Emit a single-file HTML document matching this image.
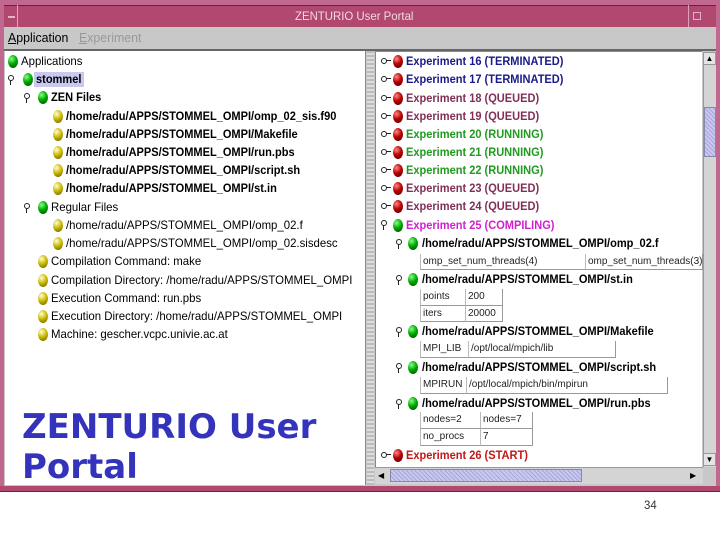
<!DOCTYPE html>
<html><head><meta charset="utf-8"><style>
*{margin:0;padding:0;box-sizing:border-box}
body{width:720px;height:540px;background:#fff;position:relative;overflow:hidden;font-family:"Liberation Sans",sans-serif}
.a{position:absolute}
.t{position:absolute;font-size:12px;line-height:14px;white-space:nowrap;color:#000;transform:scaleX(0.95);transform-origin:left center}
.t.b{font-weight:bold;transform:scaleX(0.92)}
.g,.r,.y{position:absolute;width:10px;height:13px;border-radius:50%}
.g{background:radial-gradient(circle at 35% 30%,#8f8,#0a0 45%,#040 100%)}
.r{background:radial-gradient(circle at 35% 30%,#f88,#b00 45%,#400 100%)}
.y{background:radial-gradient(circle at 35% 30%,#ffd,#cb0 45%,#650 100%)}
.k{position:absolute;width:6px;height:6px;border:1.5px solid #222;border-radius:50%}
.k:after{content:"";position:absolute;left:1px;top:4px;width:1px;height:5px;background:#222}
.kr{position:absolute;width:6px;height:6px;border:1.5px solid #222;border-radius:50%}
.kr:after{content:"";position:absolute;left:4px;top:1px;width:5px;height:1px;background:#222}
.c{position:absolute;border:1px solid #999;border-top:none;border-left:1px solid #bbb;font-size:10px;line-height:15px;padding-left:2px;color:#222;white-space:nowrap;overflow:hidden}
</style></head><body>
<div class="a" style="left:0;top:0;width:720px;height:492px;background:#c06890"></div>
<div class="a" style="left:4px;top:5px;width:712px;height:22px;background:#b04870;border-top:1px solid #6a2040"></div>
<div class="a" style="left:17px;top:5px;width:1px;height:22px;background:#e0a0c0"></div>
<div class="a" style="left:8px;top:16px;width:7px;height:2px;background:#e8b0c8"></div>
<div class="a" style="left:688px;top:5px;width:1px;height:22px;background:#e0a0c0"></div>
<div class="a" style="left:693px;top:12px;width:8px;height:8px;border:1px solid #e8b0c8"></div>
<div class="t" style="left:295px;top:9px;color:#f4d8e4;font-size:12px">ZENTURIO User Portal</div>
<div class="a" style="left:4px;top:27px;width:712px;height:22px;background:#c8c8c8"></div>
<div class="t" style="left:8px;top:31px;font-size:13px"><u>A</u>pplication</div>
<div class="t" style="left:79px;top:31px;font-size:13px;color:#999"><u>E</u>xperiment</div>
<div class="a" style="left:4px;top:49px;width:712px;height:2px;background:#666"></div>
<div class="a" style="left:4px;top:51px;width:712px;height:435px;background:#c8c8c8"></div>
<div class="a" style="left:5px;top:51px;width:361px;height:434px;background:#fff;border-right:1px solid #888"></div>
<div class="a" style="left:367px;top:51px;width:7px;height:434px;background:repeating-linear-gradient(0deg,#bbb 0 2px,#ddd 2px 4px)"></div>
<div class="a" style="left:375px;top:51px;width:327px;height:416px;background:#fff;border-left:1px solid #888;border-top:1px solid #888"></div>
<div class="a" style="left:703px;top:52px;width:13px;height:415px;background:#d4d4d4;border-left:1px solid #999"></div>
<div class="a" style="left:703px;top:52px;width:13px;height:13px;background:#e4e4e4;border:1px solid #999;font-size:8px;text-align:center;line-height:11px">▲</div>
<div class="a" style="left:704px;top:107px;width:12px;height:50px;background:repeating-linear-gradient(45deg,#a8a8d8 0 1px,#c8c8f0 1px 3px);border:1px solid #88a"></div>
<div class="a" style="left:703px;top:453px;width:13px;height:13px;background:#e4e4e4;border:1px solid #999;font-size:8px;text-align:center;line-height:11px">▼</div>
<div class="a" style="left:375px;top:467px;width:328px;height:17px;background:#d4d4d4;border-top:1px solid #999"></div>
<div class="a" style="left:378px;top:469px;width:10px;height:13px;font-size:8px;line-height:13px">◀</div>
<div class="a" style="left:390px;top:469px;width:192px;height:13px;background:repeating-linear-gradient(45deg,#a8a8d8 0 1px,#c8c8f0 1px 3px);border:1px solid #88a"></div>
<div class="a" style="left:690px;top:469px;width:10px;height:13px;font-size:8px;line-height:13px">▶</div>
<div class="a" style="left:0;top:486px;width:720px;height:6px;background:#b04870;border-bottom:1px solid #6a2040"></div>

<div class="g" style="left:8px;top:55px"></div><div class="t" style="left:21px;top:54px">Applications</div>
<div class="k" style="left:8px;top:75px"></div><div class="g" style="left:23px;top:73px"></div>
<div class="a" style="left:34px;top:72px;width:50px;height:15px;background:#c8c8f0"></div><div class="t b" style="left:36px;top:72px">stommel</div>
<div class="k" style="left:24px;top:93px"></div><div class="g" style="left:38px;top:91px"></div><div class="t b" style="left:51px;top:90px">ZEN Files</div>
<div class="y" style="left:53px;top:110px"></div><div class="t b" style="left:66px;top:109px">/home/radu/APPS/STOMMEL_OMPI/omp_02_sis.f90</div>
<div class="y" style="left:53px;top:128px"></div><div class="t b" style="left:66px;top:127px">/home/radu/APPS/STOMMEL_OMPI/Makefile</div>
<div class="y" style="left:53px;top:146px"></div><div class="t b" style="left:66px;top:145px">/home/radu/APPS/STOMMEL_OMPI/run.pbs</div>
<div class="y" style="left:53px;top:164px"></div><div class="t b" style="left:66px;top:163px">/home/radu/APPS/STOMMEL_OMPI/script.sh</div>
<div class="y" style="left:53px;top:182px"></div><div class="t b" style="left:66px;top:181px">/home/radu/APPS/STOMMEL_OMPI/st.in</div>
<div class="k" style="left:24px;top:203px"></div><div class="g" style="left:38px;top:201px"></div><div class="t" style="left:51px;top:200px">Regular Files</div>
<div class="y" style="left:53px;top:219px"></div><div class="t" style="left:66px;top:218px">/home/radu/APPS/STOMMEL_OMPI/omp_02.f</div>
<div class="y" style="left:53px;top:237px"></div><div class="t" style="left:66px;top:236px">/home/radu/APPS/STOMMEL_OMPI/omp_02.sisdesc</div>
<div class="y" style="left:38px;top:255px"></div><div class="t" style="left:51px;top:254px">Compilation Command: make</div>
<div class="y" style="left:38px;top:274px"></div><div class="t" style="left:51px;top:273px">Compilation Directory: /home/radu/APPS/STOMMEL_OMPI</div>
<div class="y" style="left:38px;top:292px"></div><div class="t" style="left:51px;top:291px">Execution Command: run.pbs</div>
<div class="y" style="left:38px;top:310px"></div><div class="t" style="left:51px;top:309px">Execution Directory: /home/radu/APPS/STOMMEL_OMPI</div>
<div class="y" style="left:38px;top:328px"></div><div class="t" style="left:51px;top:327px">Machine: gescher.vcpc.univie.ac.at</div>
<div class="a" style="left:22px;top:407px;font-family:'Comic Sans MS','DejaVu Sans',sans-serif;font-size:34px;line-height:40px;font-weight:bold;color:#3333bb;white-space:nowrap">ZENTURIO User<br>Portal</div>

<div class="kr" style="left:381px;top:58px"></div><div class="r" style="left:393px;top:55px"></div><div class="t b" style="left:406px;top:54px;color:#1a1a8a">Experiment 16 (TERMINATED)</div>
<div class="kr" style="left:381px;top:76px"></div><div class="r" style="left:393px;top:73px"></div><div class="t b" style="left:406px;top:72px;color:#1a1a8a">Experiment 17 (TERMINATED)</div>
<div class="kr" style="left:381px;top:95px"></div><div class="r" style="left:393px;top:92px"></div><div class="t b" style="left:406px;top:91px;color:#803055">Experiment 18 (QUEUED)</div>
<div class="kr" style="left:381px;top:113px"></div><div class="r" style="left:393px;top:110px"></div><div class="t b" style="left:406px;top:109px;color:#803055">Experiment 19 (QUEUED)</div>
<div class="kr" style="left:381px;top:131px"></div><div class="r" style="left:393px;top:128px"></div><div class="t b" style="left:406px;top:127px;color:#209a20">Experiment 20 (RUNNING)</div>
<div class="kr" style="left:381px;top:149px"></div><div class="r" style="left:393px;top:146px"></div><div class="t b" style="left:406px;top:145px;color:#209a20">Experiment 21 (RUNNING)</div>
<div class="kr" style="left:381px;top:167px"></div><div class="r" style="left:393px;top:164px"></div><div class="t b" style="left:406px;top:163px;color:#209a20">Experiment 22 (RUNNING)</div>
<div class="kr" style="left:381px;top:185px"></div><div class="r" style="left:393px;top:182px"></div><div class="t b" style="left:406px;top:181px;color:#803055">Experiment 23 (QUEUED)</div>
<div class="kr" style="left:381px;top:203px"></div><div class="r" style="left:393px;top:200px"></div><div class="t b" style="left:406px;top:199px;color:#803055">Experiment 24 (QUEUED)</div>
<div class="k" style="left:381px;top:220px"></div><div class="g" style="left:393px;top:219px"></div><div class="t b" style="left:406px;top:218px;color:#d020d0">Experiment 25 (COMPILING)</div>

<div class="k" style="left:396px;top:239px"></div><div class="g" style="left:408px;top:237px"></div><div class="t b" style="left:422px;top:236px">/home/radu/APPS/STOMMEL_OMPI/omp_02.f</div>
<div class="c" style="left:420px;top:254px;width:166px;height:16px">omp_set_num_threads(4)</div>
<div class="c" style="left:585px;top:254px;width:118px;height:16px">omp_set_num_threads(3)</div>
<div class="k" style="left:396px;top:275px"></div><div class="g" style="left:408px;top:273px"></div><div class="t b" style="left:422px;top:272px">/home/radu/APPS/STOMMEL_OMPI/st.in</div>
<div class="c" style="left:420px;top:289px;width:46px;height:17px">points</div>
<div class="c" style="left:465px;top:289px;width:38px;height:17px">200</div>
<div class="c" style="left:420px;top:306px;width:46px;height:16px">iters</div>
<div class="c" style="left:465px;top:306px;width:38px;height:16px">20000</div>
<div class="k" style="left:396px;top:327px"></div><div class="g" style="left:408px;top:325px"></div><div class="t b" style="left:422px;top:324px">/home/radu/APPS/STOMMEL_OMPI/Makefile</div>
<div class="c" style="left:420px;top:341px;width:49px;height:17px">MPI_LIB</div>
<div class="c" style="left:468px;top:341px;width:148px;height:17px">/opt/local/mpich/lib</div>
<div class="k" style="left:396px;top:363px"></div><div class="g" style="left:408px;top:361px"></div><div class="t b" style="left:422px;top:360px">/home/radu/APPS/STOMMEL_OMPI/script.sh</div>
<div class="c" style="left:420px;top:377px;width:47px;height:17px">MPIRUN</div>
<div class="c" style="left:466px;top:377px;width:202px;height:17px">/opt/local/mpich/bin/mpirun</div>
<div class="k" style="left:396px;top:399px"></div><div class="g" style="left:408px;top:397px"></div><div class="t b" style="left:422px;top:396px">/home/radu/APPS/STOMMEL_OMPI/run.pbs</div>
<div class="c" style="left:420px;top:412px;width:61px;height:17px">nodes=2</div>
<div class="c" style="left:480px;top:412px;width:53px;height:17px">nodes=7</div>
<div class="c" style="left:420px;top:429px;width:61px;height:17px">no_procs</div>
<div class="c" style="left:480px;top:429px;width:53px;height:17px">7</div>
<div class="kr" style="left:381px;top:452px"></div><div class="r" style="left:393px;top:449px"></div><div class="t b" style="left:406px;top:448px;color:#c01818">Experiment 26 (START)</div>

<div class="t" style="left:644px;top:498px;font-size:12px;color:#333">34</div>
</body></html>
